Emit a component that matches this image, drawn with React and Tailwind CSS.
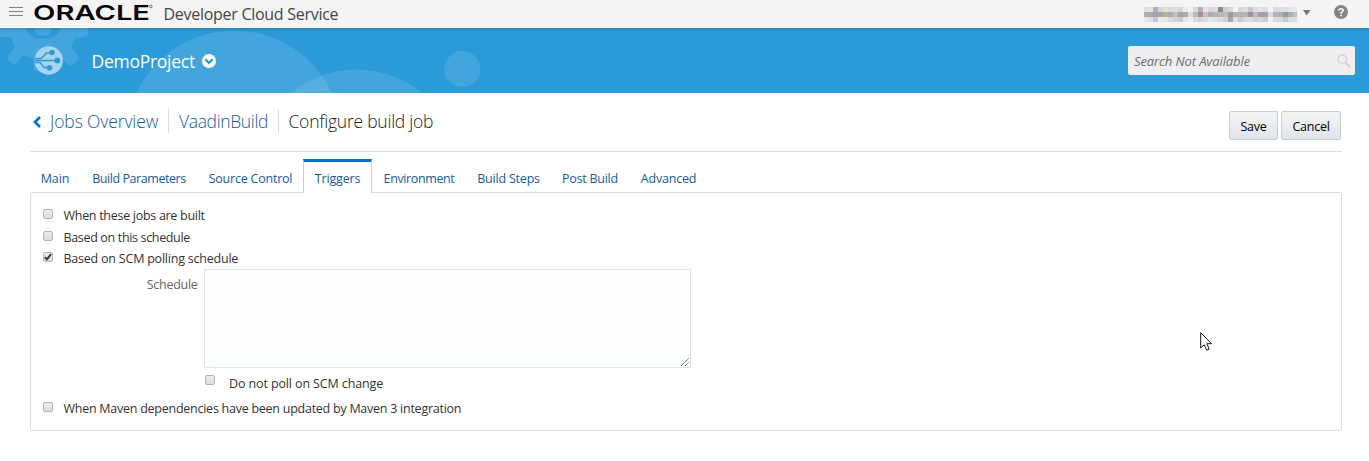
const MOSAIC = [
  ['#e6dfe0','#e6e2dc','#aeadc9','#d3d4d6','#e2ded6','#d8dcdc','#dcdcde','#d3d8d6','#ebebee','#f0f0f0','#d6dcd9','#b9aac0','#e4e4e2','#d8d8da','#dedcd8','#8b8b8e','#d0d0d4','#dadadd','#f0f0f0','#d6d8dc','#e2dfe0','#cbc4d2','#d9dfe0','#e5e2e3','#dddddf','#f3f3f3','#dadadd','#dededf','#e0e0e2','#e6e6e8','#e6e6e6'],
  ['#b9a9b0','#b3a5ac','#a89fb0','#97b0ae','#b9af97','#a2b3b3','#c6bdc2','#a4a3b0','#a9a9a0','#dadbdc','#a9c5c0','#a98f97','#c4c2c6','#9fb3b5','#c5b0a6','#a9bfc0','#c9b8ae','#9a9ba9','#b0b2b8','#c0b0a6','#a5bdba','#a58f93','#acc0c8','#b09ba9','#a6a09f','#dadadd','#b5b0c0','#b3aeb8','#949b98','#a8b0af','#b7c5c2'],
  ['#e6e4e6','#dedde0','#c9c9d0','#ebebe6','#e8e8e4','#d9dbe0','#d5d2d5','#c9cbd0','#e7e7ea','#ececec','#d8dadd','#ddd0d4','#d8dddf','#e6e6e8','#e5e0dc','#dadce0','#d2d2d6','#a8a8ae','#dcdde0','#c9cbcd','#d5d9dc','#dadade','#ccd1d5','#d9d4dc','#c9cbcf','#f0f0f0','#dadbe0','#d5d9da','#c6c9cc','#dddfe1','#dcdfe0'],
];

const TABS = [
  ['Main', 'w-[50px] tracking-[-0.1px]'],
  ['Build Parameters', 'w-[118px] tracking-[-0.44px]'],
  ['Source Control', 'w-[105px] tracking-[-0.22px]'],
  ['Triggers', 'w-[69px] tracking-[-0.15px]'],
  ['Environment', 'w-[94px] tracking-[-0.38px]'],
  ['Build Steps', 'w-[85px] tracking-[-0.2px]'],
  ['Post Build', 'w-[78px] tracking-[-0.26px]'],
  ['Advanced', 'w-[79px] tracking-[-0.2px]'],
];

function Check({ checked }) {
  return (
    <span className="flex size-[10px] shrink-0 items-center justify-center rounded-[2px] border border-[#b4b4b4] bg-linear-to-b from-[#ededed] to-[#dcdcdc]">
      {checked && (
        <svg viewBox="0 0 8 8" className="size-2" fill="none" stroke="#333" strokeWidth="1.9">
          <path d="M0.8 4.2 L3 6.3 L7 1.2" />
        </svg>
      )}
    </span>
  );
}

function Row({ label, className, checked }) {
  return (
    <label className={`flex items-start ${className}`}>
      <Check checked={checked} />
      <span className="ml-[10.5px] mt-[-2px] whitespace-nowrap leading-[17px]">{label}</span>
    </label>
  );
}

function TopBar() {
  return (
    <header className="flex h-[27px] items-start bg-[#f4f4f4]">
      <svg width="14" height="9" className="ml-[9px] mt-[7px]" stroke="#7d8083">
        <path d="M0 .5H14M0 4.5H14M0 8.5H14" />
      </svg>
      <svg width="122" height="27" className="ml-[9px] overflow-visible">
        <text x="1" y="19.9" textLength="117" lengthAdjust="spacingAndGlyphs" fontFamily="Inter" fontWeight="600" fontSize="20.6" fill="#050505">ORACLE</text>
        <circle cx="118.8" cy="6.5" r="1.3" fill="none" stroke="#333" strokeWidth=".7" />
      </svg>
      <span className="ml-[9.5px] mt-[3px] w-[180px] whitespace-nowrap text-[16px] leading-[22px] tracking-[-0.28px] text-[#434648]">Developer Cloud Service</span>
      <svg width="153" height="15" className="ml-auto mt-[7px]" shapeRendering="crispEdges">
        {MOSAIC.map((row, y) => row.map((c, x) => <rect key={`${x}-${y}`} x={x * 5 - (x > 0 ? 1 : 0)} y={y * 5} width="5" height="5" fill={c} />))}
      </svg>
      <svg width="8" height="6" className="ml-[6px] mt-[10px]"><path d="M0 0H7.5L3.75 5.5Z" fill="#737679" /></svg>
      <svg width="14" height="14" className="ml-[23px] mr-[21.5px] mt-[5px]" viewBox="0 0 14 14">
        <circle cx="7" cy="7" r="7" fill="#838689" />
        <path d="M4.9 5.5C5 3 9.1 3.2 9.1 5.5C9.1 7 7 7 7 8.7M7 9.7V11.2" fill="none" stroke="#fff" strokeWidth="1.6" />
      </svg>
    </header>
  );
}

function BannerArt() {
  return (
    <svg width="560" height="65" className="absolute left-0 top-0">
      <defs><clipPath id="disc"><circle cx="48.7" cy="32.5" r="14.2" /></clipPath></defs>
      <g fill="#fff" fillOpacity=".11">
        <path fillRule="evenodd" d="M0 0H88V7L86 9L75 10Q73 15 71 20L79 29V32L73 37H69L60 28Q55 30 51 31V43H34V31L23 27L16 36H13L8 32V28L15 19L11 9H0ZM26 0A17 11 0 0 0 60 0Z" />
        <path d="M34 0A9 8 0 0 0 52 0Z" />
        <path d="M136.5 65A107.7 107.7 0 0 1 332 65Z" />
        <path d="M291 65A103 103 0 0 1 422 65Z" />
        <circle cx="462.5" cy="41" r="18" />
      </g>
      <circle cx="48.7" cy="32.5" r="14.2" fill="#a6d4ef" />
      <g stroke="#2b9ad9" strokeWidth="1.5" fill="none" clipPath="url(#disc)">
        <path d="M34 30.6H41L46.5 25H51M34 32.6H58M34 34.6H40L44 39.5H50" />
      </g>
      <g fill="#2b9ad9"><circle cx="52" cy="24.5" r="2.7" /><circle cx="57.3" cy="32.4" r="2.9" /><circle cx="49.5" cy="39.8" r="2.8" /></g>
    </svg>
  );
}

function Banner() {
  return (
    <div className="relative mt-px flex h-[65px] overflow-hidden bg-[#2b9ad9] bg-linear-to-b from-[#2689c1] to-[#2b9ad9] to-[5px]">
      <BannerArt />
      <h1 className="relative ml-[91.5px] mt-[21px] w-[104px] whitespace-nowrap text-[17.5px] leading-[25px] tracking-[-0.27px] text-white">DemoProject</h1>
      <svg width="14" height="14" viewBox="0 0 14 14" className="relative ml-[6.5px] mt-[26px]">
        <circle cx="7" cy="7" r="7" fill="#fff" />
        <path d="M3.4 5.4L7 9L10.6 5.4" fill="none" stroke="#2b9ad9" strokeWidth="2.2" />
      </svg>
      <div className="ml-auto mr-[14px] mt-[18px] flex h-[29px] w-[227px] items-center rounded-[2px] bg-[#eeeef0] pl-[6px] pr-[4px]">
        <span className="pt-[3px] text-[13px] italic tracking-[-0.11px] text-[#6c6c6c]">Search Not Available</span>
        <svg width="14" height="14" viewBox="0 0 14 14" className="ml-auto" fill="none" stroke="#d4d4d6">
          <circle cx="5.3" cy="5.3" r="4.3" strokeWidth="1.5" /><path d="M8.6 8.6L13 13" strokeWidth="2.3" />
        </svg>
      </div>
    </div>
  );
}

export default function App() {
  const button = 'h-[29px] whitespace-nowrap rounded-[2px] border border-[#c4ced7] bg-linear-to-b from-[#f3f4f5] to-[#e1e5e9] pt-[3px] text-[12.5px] text-black';
  return (
    <div className="relative h-[461px] w-[1369px] overflow-hidden bg-white font-['Open_Sans',sans-serif] text-[12.5px] text-[#333]">
      <TopBar />
      <Banner />
      <div className="ml-[30px] mr-[27px] flex h-[59px] items-start border-b border-[#d6dfe6]">
        <svg width="8" height="12" viewBox="0 0 8 12" className="ml-[3px] mt-[23px]" fill="none" stroke="#0572ce" strokeWidth="2.8"><path d="M7 1L2 6L7 11" /></svg>
        <nav className="ml-[9px] mt-[16px] flex whitespace-nowrap text-[17.5px] font-light leading-[24px] text-[#145c9e]">
          <a className="w-[118px] tracking-[-0.12px]">Jobs Overview</a>
          <a className="w-[110px] border-l border-[#d6dfe6] pl-[10px] tracking-[-0.35px]">VaadinBuild</a>
          <span className="border-l border-[#d6dfe6] pl-[9.5px] tracking-[-0.24px] text-[#222]">Configure build job</span>
        </nav>
        <div className="ml-auto mr-px mt-[18px] flex gap-[3px]">
          <button className={`w-[49px] tracking-[-0.3px] ${button}`}>Save</button>
          <button className={`w-[60px] tracking-[-0.25px] ${button}`}>Cancel</button>
        </div>
      </div>
      <div className="ml-[30px] mt-[7px] flex h-[33px]">
        {TABS.map(([name, cls]) => (
          <div key={name} className={`flex shrink-0 justify-center whitespace-nowrap leading-[17px] text-[#145c9e] ${cls} ${name === 'Triggers' ? 'relative z-10 h-[34px] border-x border-t-[3px] border-x-[#c4d0da] border-t-[#0572ce] bg-white pt-[8px]' : 'pt-[11px]'}`}>{name}</div>
        ))}
      </div>
      <main className="ml-[30px] flex h-[239px] w-[1312px] flex-col rounded-[2px] border border-[#d6dfe6] pl-[12px] pt-[16px]">
        <Row label="When these jobs are built" className="h-[22px] tracking-[-0.29px]" />
        <Row label="Based on this schedule" className="h-[21px] tracking-[-0.34px]" />
        <Row label="Based on SCM polling schedule" className="h-[17px] tracking-[-0.22px]" checked />
        <div className="flex h-[106px] items-start">
          <span className="w-[161px] pr-[6.5px] pt-[7px] text-right leading-[17px] tracking-[-0.28px] text-[#666]">Schedule</span>
          <div className="flex h-[99px] w-[487px] items-end justify-end rounded-[1px] border border-[#dfe4e7] bg-[#fcfdfe]">
            <svg width="10" height="10" stroke="#555" strokeDasharray="1.4 .4"><path d="M1 9L9 1M5 9L9 5" /></svg>
          </div>
        </div>
        <label className="flex h-[27px] items-start pl-[162px]">
          <Check />
          <span className="ml-[14px] whitespace-nowrap leading-[17px] tracking-[-0.12px]">Do not poll on SCM change</span>
        </label>
        <Row label="When Maven dependencies have been updated by Maven 3 integration" className="tracking-[-0.255px]" />
      </main>
      <svg width="13" height="20" viewBox="0 0 13 20" className="absolute left-[1200px] top-[332px]">
        <path d="M.7 .7V16L4.2 12.8L6.8 18.2L9.2 17.1L6.8 11.7H11.5Z" fill="#fff" stroke="#15152a" strokeWidth="1" />
      </svg>
    </div>
  );
}
